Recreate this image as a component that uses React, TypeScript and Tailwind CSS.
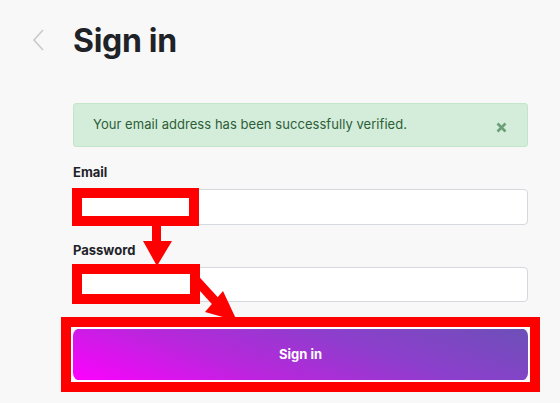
import React from "react";

export default function App() {
  return (
    <div className="min-h-screen w-[560px] h-[403px] overflow-hidden bg-[#f8f8f8] font-['Inter','Liberation_Sans',sans-serif] text-[#1f2328]">
      <div className="relative flex pl-[32px] pr-[32px] pt-[22px]">
        <div className="w-[41px] pt-[6px]">
          <svg width="13" height="24" viewBox="0 0 13 24" fill="none">
            <path d="M11 2 L2 12 L11 22" stroke="#c9c9c9" strokeWidth="1.6" />
          </svg>
        </div>
        <div className="flex-1">
          <h1 className="text-[32px] font-bold leading-[38px] tracking-[-0.3px]">Sign in</h1>

          <div className="mt-[43px] flex h-[44px] items-center justify-between rounded-[3px] border border-[#c3e6cb] bg-[#d4edda] pl-[19px] pr-[20px]">
            <span className="text-[13px] tracking-[0.05px] text-[#2c5e37]">Your email address has been successfully verified.</span>
            <svg width="11" height="11" viewBox="0 0 11 11" className="mt-[4px]">
              <path d="M1.5 1.5 L9.5 9.5 M9.5 1.5 L1.5 9.5" stroke="#6b9f77" strokeWidth="2.6" />
            </svg>
          </div>

          <label className="mt-[17px] block text-[13px] font-bold leading-[16px]">Email</label>
          <div className="mt-[9px] h-[36px] rounded-[4px] border border-[#d5d8dc] bg-white" />

          <label className="mt-[17px] block text-[13px] font-bold leading-[16px]">Password</label>
          <div className="mt-[9px] h-[35px] rounded-[4px] border border-[#d5d8dc] bg-white" />

          <button className="mt-[26px] flex h-[53px] w-full items-center justify-center rounded-[8px] bg-[linear-gradient(20deg,#ff00ff_0%,#b827dc_35%,#8c3fcc_65%,#6c50b8_100%)] text-[13px] font-bold text-white">
            Sign in
          </button>
        </div>
      </div>

      {/* annotation overlay */}
      <div className="pointer-events-none absolute left-[72px] top-[188px] h-[38px] w-[127px] border-[10px] border-[#ff0000] bg-white" />
      <div className="pointer-events-none absolute left-[72px] top-[264px] h-[40px] w-[128px] border-[10px] border-[#ff0000] bg-white" />
      <div className="pointer-events-none absolute left-[61px] top-[317px] h-[75px] w-[479px] border-[10px] border-[#ff0000] shadow-[inset_0_0_0_2px_#ffffff]" />
      <svg className="pointer-events-none absolute left-0 top-0" width="560" height="403">
        <rect x="152" y="226" width="9" height="17" fill="#ff0000" />
        <polygon points="143,241 172,241 157,266" fill="#ff0000" />
        <line x1="196" y1="280" x2="217" y2="303" stroke="#ff0000" strokeWidth="9" />
        <polygon points="223,291 205,312 237,321" fill="#ff0000" />
      </svg>
    </div>
  );
}
